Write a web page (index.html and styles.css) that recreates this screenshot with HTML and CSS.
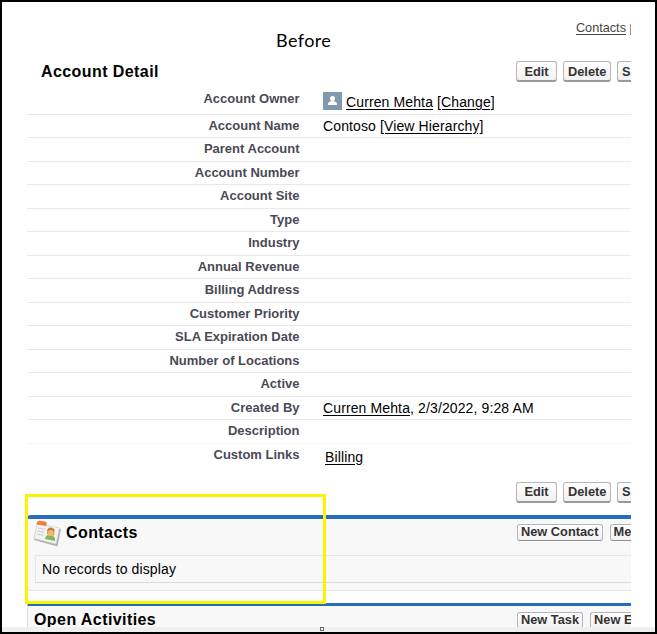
FILE: index.html
```html
<!DOCTYPE html>
<html lang="en">
<head>
<meta charset="utf-8">
<title>Account Detail</title>
<link rel="stylesheet" href="styles.css">
</head>
<body>
<div class="frame">
  <main class="page">
    <header class="top">
      <div class="caption">Before</div>
      <div class="quick"><a>Contacts</a> <i class="sep"></i></div>
    </header>
    <div class="title-row">
      <h1>Account Detail</h1>
      <div class="buttons"><button>Edit</button><button>Delete</button><button class="cut">S</button></div>
    </div>
    <dl class="detail">
      <div class="row first"><dt>Account Owner</dt><dd><svg class="avatar" viewBox="0 0 19 18"><rect width="19" height="18" fill="#8199af"/><circle cx="9.5" cy="6.4" r="2.5" fill="#fff"/><path d="M5 13v-1.300c0-1.500 2-2.300 3.300-2.700h2.400c1.300.4 3.300 1.200 3.300 2.700V13z" fill="#fff"/></svg><a>Curren Mehta</a> <a>[Change]</a></dd></div>
      <div class="row"><dt>Account Name</dt><dd>Contoso <a>[View Hierarchy]</a></dd></div>
      <div class="row"><dt>Parent Account</dt><dd></dd></div>
      <div class="row"><dt>Account Number</dt><dd></dd></div>
      <div class="row"><dt>Account Site</dt><dd></dd></div>
      <div class="row"><dt>Type</dt><dd></dd></div>
      <div class="row"><dt>Industry</dt><dd></dd></div>
      <div class="row"><dt>Annual Revenue</dt><dd></dd></div>
      <div class="row"><dt>Billing Address</dt><dd></dd></div>
      <div class="row"><dt>Customer Priority</dt><dd></dd></div>
      <div class="row"><dt>SLA Expiration Date</dt><dd></dd></div>
      <div class="row"><dt>Number of Locations</dt><dd></dd></div>
      <div class="row"><dt>Active</dt><dd></dd></div>
      <div class="row"><dt>Created By</dt><dd><a>Curren Mehta</a>, 2/3/2022, 9:28 AM</dd></div>
      <div class="row faint"><dt>Description</dt><dd></dd></div>
      <div class="row last"><dt>Custom Links</dt><dd><a>Billing</a></dd></div>
    </dl>
    <div class="bottom-row">
      <div class="buttons"><button>Edit</button><button>Delete</button><button class="cut">S</button></div>
    </div>
    <section class="related">
      <div class="related-head">
        <svg class="card-icon" viewBox="0 0 30 28">
          <path d="M4 5l24 4-3.500 17.500L1 20z" fill="#b0b0b0"/>
          <path d="M4 3.500l22.500 4.500-3.500 16L1 18.500z" fill="#f2f2f2" stroke="#d0d0d0" stroke-width=".7"/>
          <path d="M4 2.500Q4.500.5 6.500.7l5.500.9q2 .4 1.700 2.400l-.5 2-9.700-1.500z" fill="#ee8138"/>
          <path d="M5 8l7 1.300M4.500 11l6.500 1.300M4 14l6.500 1.400" stroke="#c8cdd0" stroke-width="1"/>
          <path d="M12 19q1-4.500 4-4l3 .5q3.500 1 3 5.500z" fill="#7dbb57"/>
          <path d="M14 14l.5-5q3.500-3 7 .5l-.5 6z" fill="#c47a38"/>
          <circle cx="17.700" cy="13" r="3.100" fill="#f4b56f"/>
        </svg>
        <h2>Contacts</h2>
        <div class="buttons small"><button>New Contact</button><button class="cut">Me</button></div>
      </div>
      <div class="empty">No records to display</div>
    </section>
    <section class="activities">
      <h2>Open Activities</h2>
      <div class="buttons small"><button>New Task</button><button class="cut">New E</button></div>
    </section>
  </main>
  <div class="strip"></div>
  <div class="highlight"></div>
  <div class="handle"></div>
</div>
</body>
</html>
```
FILE: styles.css
```css
* { box-sizing: border-box; }
body { margin: 0; font-family: "Liberation Sans", Arial, sans-serif; color: #000; }
.frame { position: relative; width: 657px; height: 634px; border: 2px solid #000; background: #fff; overflow: hidden; }
.page { width: 604px; height: 625px; margin-left: 25px; overflow: hidden; }
h1, h2 { margin: 0; font-size: 16px; line-height: 20px; font-weight: bold; letter-spacing: .42px; white-space: nowrap; }
a { text-decoration: underline; text-underline-offset: 2px; }
.top { height: 55px; display: flex; justify-content: space-between; padding-left: 249px; }
.caption { font-family: Lato, sans-serif; font-size: 18px; line-height: 24px; letter-spacing: .4px; padding-top: 26px; }
.quick { display: flex; gap: 4px; padding-top: 18px; font-size: 12.700px; line-height: 16px; color: #444; }
.sep { width: 1px; height: 11px; margin-top: 4px; background: #c08a4e; }
.title-row { height: 30px; display: flex; justify-content: space-between; padding: 4px 0 0 14px; }
h1 { margin-top: 1px; }
.buttons { display: flex; gap: 6px; width: 115px; flex: none; }
button { flex: none; height: 21px; padding: 0 4px; border: 1px solid #b5b5b5; border-bottom: 2px solid #999; border-radius: 3px; background: linear-gradient(#fff, #f1f1f1); font: bold 12.800px/17px "Liberation Sans", Arial, sans-serif; color: #333; white-space: nowrap; }
.buttons:not(.small) button:nth-child(1) { width: 41px; }
.buttons:not(.small) button:nth-child(2) { width: 48px; }
button.cut { flex: 1 1 0; min-width: 0; padding-right: 0; border-right: 0; border-top-right-radius: 0; border-bottom-right-radius: 0; text-align: left; }
.detail { margin: 0; }
.row { display: grid; grid-template-columns: 272.500px 1fr; column-gap: 23.500px; height: 23.500px; border-bottom: 1px solid #e8e8e8; align-items: start; }
.row.first { height: 27.500px; }
.row.faint { border-color: #f5f5f5; }
.row.last { height: 38px; border: 0; }
dt { font-weight: bold; font-size: 13px; line-height: 16px; color: #4a4a56; text-align: right; padding-top: 3px; white-space: nowrap; }
dd { margin: 0; font-size: 14px; line-height: 17px; letter-spacing: .12px; padding-top: 3px; white-space: nowrap; }
.first dt { padding-top: 4px; }
.first dd { padding-top: 7px; }
.last dd { padding: 5px 0 0 2px; }
.avatar { width: 19px; height: 18px; float: left; margin: -2px 4px 0 0; }
.bottom-row { height: 33px; display: flex; justify-content: flex-end; }
.related { height: 76px; width: 620px; border: 1px solid #e3e5e8; border-top: 4px solid #236fbd; border-radius: 4px; background: #f8f8f8; }
.related-head { display: flex; height: 36px; padding-left: 5px; }
.card-icon { width: 30px; height: 28px; margin-top: 1px; }
.related-head h2 { margin: 4px 0 0 3px; }
.small { width: 114px; margin-left: auto; gap: 7px; }
.small button { height: 17px; line-height: 14px; border-bottom-width: 1px; border-bottom-color: #8f8f8f; padding: 0 3px; }
.related-head .small { margin-right: 15px; padding-top: 5px; }
.empty { margin-left: 7px; height: 28px; border: 1px solid #e6e7e9; border-bottom-color: #d8dee4; padding-left: 6px; font-size: 14px; line-height: 26px; letter-spacing: .12px; }
.activities { height: 40px; margin-top: 12px; border-top: 3px solid #236fbd; border-left: 1px solid #ddd; background: #f8f8f8; display: flex; padding: 4px 0 0 6px; }
.activities .small { padding-top: 2px; }
.strip { height: 5px; background: #efefef; }
.highlight { position: absolute; left: 23px; top: 492px; width: 301px; height: 110px; border: 3px solid #fff200; }
.handle { position: absolute; left: 318px; top: 625px; width: 4px; height: 4px; border: 1px solid #666; background: #fff; }
```
